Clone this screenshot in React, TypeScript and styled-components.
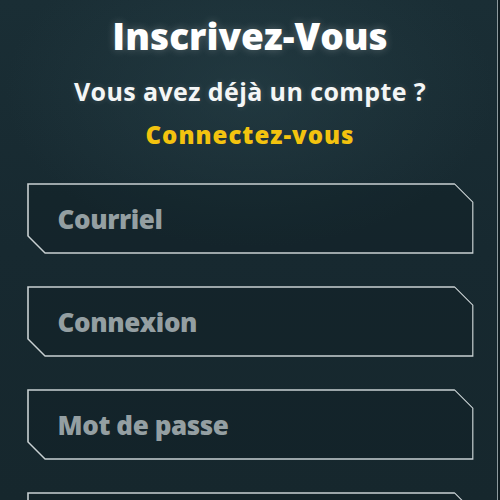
import React from "react";
import styled, { createGlobalStyle } from "styled-components";

const Global = createGlobalStyle`
  html, body { margin: 0; padding: 0; background: #0f1d23; }
  body { font-family: "Open Sans", Roboto, Arial, sans-serif; }
  * { box-sizing: border-box; }
`;

const Page = styled.div`
  position: relative;
  width: 500px;
  height: 500px;
  overflow: hidden;
  background:
    radial-gradient(ellipse 70% 45% at 50% 18%, rgba(40, 66, 74, 0.55), rgba(40, 66, 74, 0) 70%),
    linear-gradient(180deg, #1a2e35 0%, #172930 50%, #16272d 100%);
  display: flex;
  flex-direction: column;
  align-items: center;
  padding-top: 18px;
  &::after {
    content: "";
    position: absolute;
    top: 0;
    right: 2px;
    width: 1px;
    height: 100%;
    background: #8d9a9e;
  }
  &::before {
    content: "";
    position: absolute;
    top: 0;
    right: 0;
    width: 2px;
    height: 100%;
    background: #101d22;
  }
`;

const Title = styled.h1`
  margin: 0;
  font-family: "Open Sans", sans-serif;
  font-weight: 800;
  font-size: 37px;
  line-height: 36px;
  color: #ffffff;
  letter-spacing: 0px;
  text-shadow: 0 0 8px rgba(255, 255, 255, 0.25);
`;

const Subtitle = styled.p`
  margin: 24px 0 0;
  font-family: "Open Sans", sans-serif;
  font-weight: 700;
  font-size: 25px;
  line-height: 26px;
  color: #f4f6f6;
  letter-spacing: 0.4px;
  text-shadow: 0 0 6px rgba(255, 255, 255, 0.15);
`;

const Link = styled.a`
  margin-top: 18px;
  font-family: "Open Sans", sans-serif;
  font-weight: 800;
  font-size: 24px;
  line-height: 25px;
  letter-spacing: 1px;
  color: #f3c30f;
  text-decoration: none;
  cursor: pointer;
`;

const Form = styled.form`
  margin-top: 36px;
  display: flex;
  flex-direction: column;
  gap: 32px;
`;

const Field = styled.label`
  position: relative;
  display: flex;
  align-items: center;
  width: 447px;
  height: 71px;
  background: rgba(14, 28, 33, 0.35);
  clip-path: polygon(0 0, 428px 0, 447px 19px, 447px 71px, 18px 71px, 0 53px);
`;

const Outline = styled.svg`
  position: absolute;
  inset: 0;
  pointer-events: none;
`;

const Input = styled.input`
  position: relative;
  width: 100%;
  height: 100%;
  border: none;
  outline: none;
  background: transparent;
  padding: 0 0 0 31px;
  font-family: "Open Sans", sans-serif;
  font-weight: 800;
  font-size: 26px;
  letter-spacing: -0.4px;
  color: #e8eced;
  &::placeholder {
    color: #949fa2;
  }
`;

function InputField({ placeholder, type = "text" }: { placeholder: string; type?: string }) {
  return (
    <Field>
      <Outline width="447" height="71" viewBox="0 0 447 71">
        <polygon
          points="1,1 428,1 446,19 446,70 18,70 1,53"
          fill="none"
          stroke="#c9d1d3"
          strokeWidth="1.6"
        />
      </Outline>
      <Input type={type} placeholder={placeholder} />
    </Field>
  );
}

export default function App() {
  return (
    <>
      <Global />
      <Page>
        <Title>Inscrivez-Vous</Title>
        <Subtitle>Vous avez déjà un compte ?</Subtitle>
        <Link>Connectez-vous</Link>
        <Form onSubmit={(e) => e.preventDefault()}>
          <InputField placeholder="Courriel" type="email" />
          <InputField placeholder="Connexion" />
          <InputField placeholder="Mot de passe" type="password" />
          <InputField placeholder="Confirmer le mot de passe" type="password" />
        </Form>
      </Page>
    </>
  );
}
